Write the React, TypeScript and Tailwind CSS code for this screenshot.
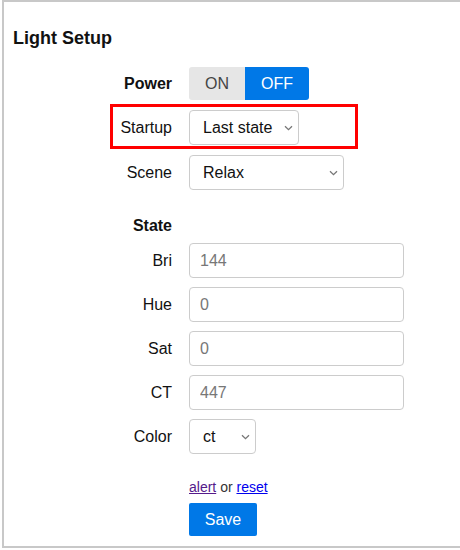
import { useState } from "react";

const font = { fontFamily: '"Liberation Sans", Arial, sans-serif' };

function Chevron() {
  return (
    <svg
      width="9"
      height="6"
      viewBox="0 0 9 6"
      className="pointer-events-none absolute right-[6px] top-1/2 -translate-y-1/2"
    >
      <path d="M1 1.2 L4.5 4.6 L8 1.2" fill="none" stroke="#777" strokeWidth="1.3" />
    </svg>
  );
}

function Select({
  value,
  options,
  width,
}: {
  value: string;
  options: string[];
  width: string;
}) {
  return (
    <div className={`relative ${width}`}>
      <select
        defaultValue={value}
        className="h-[35px] w-full appearance-none rounded-[4px] border border-[#cccccc] bg-white pl-[13px] pr-6 text-[16px] text-[#111] outline-none"
        style={font}
      >
        {options.map((o) => (
          <option key={o}>{o}</option>
        ))}
      </select>
      <Chevron />
    </div>
  );
}

function Row({
  label,
  bold,
  className,
  children,
}: {
  label: string;
  bold?: boolean;
  className?: string;
  children?: React.ReactNode;
}) {
  return (
    <div className={`relative flex items-center ${className ?? ""}`}>
      <div
        className={`w-[159px] text-right text-[16px] text-[#111] ${bold ? "font-bold" : ""}`}
      >
        {label}
      </div>
      <div className="ml-[17px]">{children}</div>
    </div>
  );
}

function NumInput({ value }: { value: string }) {
  return (
    <input
      defaultValue={value}
      className="h-[35px] w-[215px] rounded-[4px] border border-[#cccccc] bg-white px-[10px] text-[16px] text-[#777] outline-none"
      style={font}
    />
  );
}

export default function App() {
  const [power, setPower] = useState(false);

  return (
    <div className="h-[550px] w-[460px] bg-white" style={font}>
      <div className="ml-[2px] h-[548px] border-b-2 border-l-2 border-t-2 border-[#c8c8c8] pl-[9px]">
        <h2 className="mt-[25px] text-[18px] font-bold leading-[22px] text-[#111]">
          Light Setup
        </h2>

        {/* Power toggle */}
        <Row label="Power" bold className="mt-[18px]">
          <div className="flex h-[33px] text-[16px]">
            <button
              onClick={() => setPower(true)}
              className={`w-[56px] rounded-l-[3px] ${power ? "bg-[#0078e7] text-white" : "bg-[#e6e6e6] text-[#444]"}`}
            >
              ON
            </button>
            <button
              onClick={() => setPower(false)}
              className={`w-[64px] rounded-r-[3px] ${!power ? "bg-[#0078e7] text-white" : "bg-[#e6e6e6] text-[#444]"}`}
            >
              OFF
            </button>
          </div>
        </Row>

        <Row label="Startup" className="mt-[10px]">
          <Select value="Last state" options={["Last state", "On", "Off"]} width="w-[110px]" />
          <div className="pointer-events-none absolute -top-[6px] left-[97px] h-[45px] w-[248px] border-[3px] border-[#ff0000]" />
        </Row>

        <Row label="Scene" className="mt-[10px]">
          <Select value="Relax" options={["Relax", "Read", "Concentrate", "Energize"]} width="w-[155px]" />
        </Row>

        <Row label="State" bold className="mt-[26px] leading-[20px]" />

        <Row label="Bri" className="mt-[7px]">
          <NumInput value="144" />
        </Row>
        <Row label="Hue" className="mt-[9px]">
          <NumInput value="0" />
        </Row>
        <Row label="Sat" className="mt-[9px]">
          <NumInput value="0" />
        </Row>
        <Row label="CT" className="mt-[9px]">
          <NumInput value="447" />
        </Row>
        <Row label="Color" className="mt-[9px]">
          <Select value="ct" options={["ct", "xy", "hs"]} width="w-[67px]" />
        </Row>

        <div className="ml-[176px] mt-[24px] text-[14px] leading-[18px] text-[#333]">
          <a href="#" className="text-[#551a8b] underline">
            alert
          </a>{" "}
          or{" "}
          <a href="#" className="text-[#0000ee] underline">
            reset
          </a>
        </div>

        <button className="ml-[176px] mt-[7px] h-[33px] w-[68px] rounded-[2px] bg-[#0078e7] text-[16px] text-white">
          Save
        </button>
      </div>
    </div>
  );
}
